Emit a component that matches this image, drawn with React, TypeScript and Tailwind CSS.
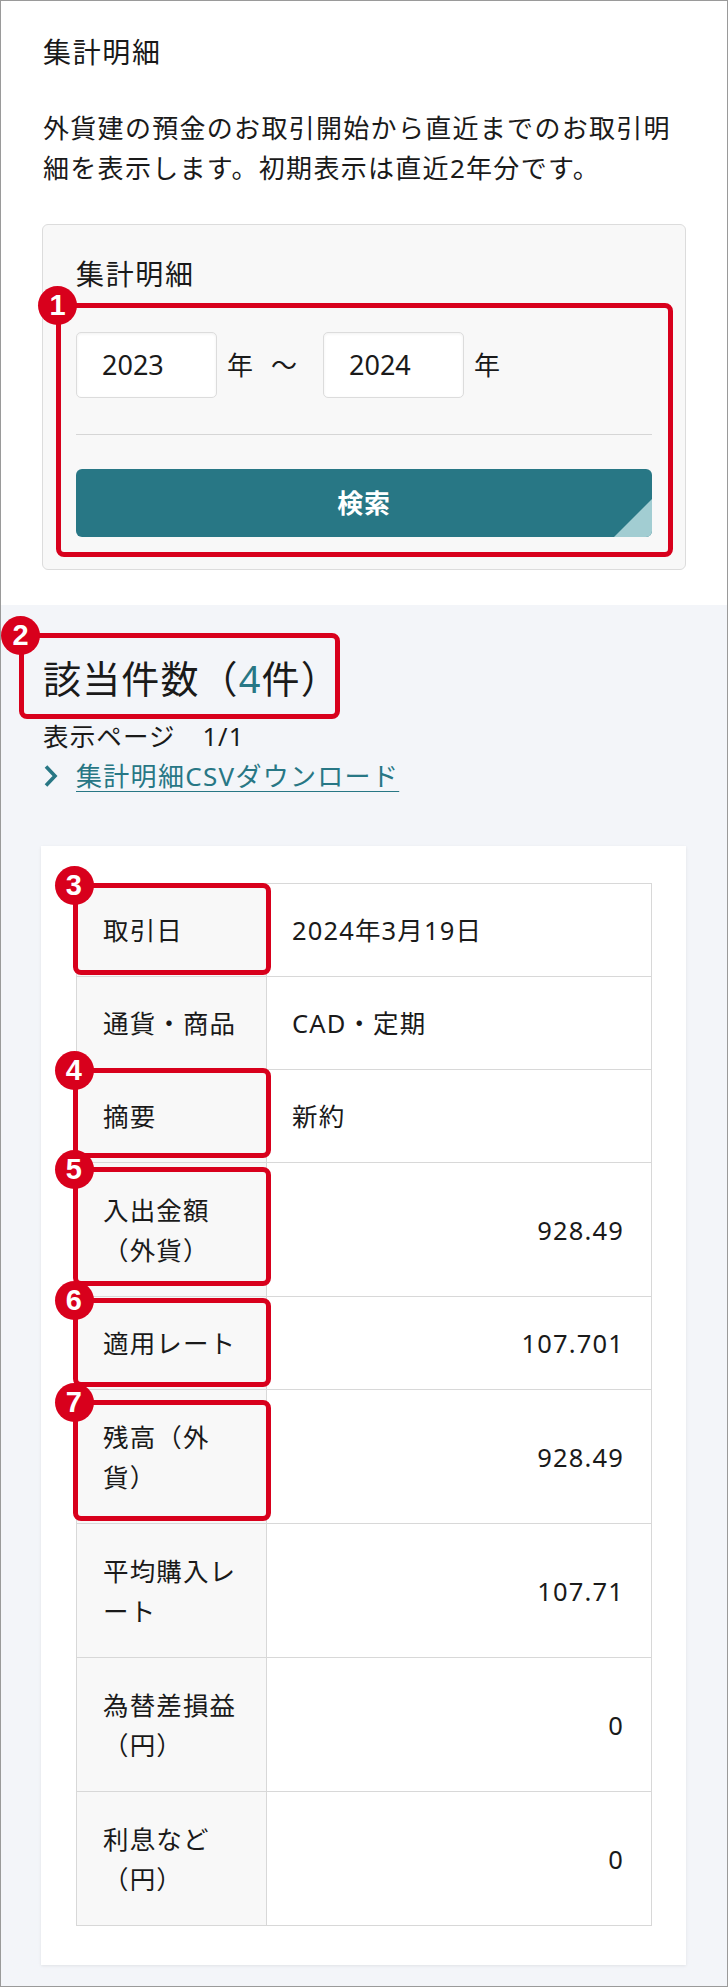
import React from "react";

function Mark({ n, box }: { n: number; box: string }) {
  return (
    <div className={`pointer-events-none absolute z-10 ${box}`}>
      <div className="absolute inset-0 rounded-[8px] border-[5px] border-[#d8001c]" />
      <div className="absolute -left-[18px] -top-[17px] flex h-[39px] w-[39px] items-center justify-center rounded-full bg-[#d8001c] font-['Liberation_Sans','Noto_Sans',sans-serif] text-[29px] font-bold leading-none text-white">
        {n}
      </div>
    </div>
  );
}

type Row = {
  label: string[];
  value: string;
  right?: boolean;
  mark?: { n: number; box: string };
};

const rows: Row[] = [
  { label: ["取引日"], value: "2024年3月19日", mark: { n: 3, box: "-left-[4px] w-[198px] -top-[1px] bottom-[1px]" } },
  { label: ["通貨・商品"], value: "CAD・定期" },
  { label: ["摘要"], value: "新約", mark: { n: 4, box: "-left-[4px] w-[198px] -top-[2px] bottom-[4px]" } },
  { label: ["入出金額", "（外貨）"], value: "928.49", right: true, mark: { n: 5, box: "-left-[4px] w-[198px] top-[4px] bottom-[10px]" } },
  { label: ["適用レート"], value: "107.701", right: true, mark: { n: 6, box: "-left-[4px] w-[198px] top-[1px] bottom-[2px]" } },
  { label: ["残高（外", "貨）"], value: "928.49", right: true, mark: { n: 7, box: "-left-[4px] w-[198px] top-[10px] bottom-[2px]" } },
  { label: ["平均購入レ", "ート"], value: "107.71", right: true },
  { label: ["為替差損益", "（円）"], value: "0", right: true },
  { label: ["利息など", "（円）"], value: "0", right: true },
];

export default function App() {
  return (
    <div className="h-[1987px] w-[728px] overflow-hidden border border-[#9a9a9a] bg-[#f3f5f9] font-['Noto_Sans','Noto_Sans_CJK_JP',sans-serif] text-[#1a1a1a]">
      {/* Top white section */}
      <section className="bg-white px-[42px] pb-[35px] pt-[31px]">
        <h1 className="text-[28px] font-normal leading-[40px] tracking-[0.06em]">集計明細</h1>
        <p className="mt-[36px] text-[26px] leading-[40px] tracking-[0.05em]">
          外貨建の預金のお取引開始から直近までのお取引明細を表示します。初期表示は直近2年分です。
        </p>

        <div className="relative -mx-[1px] mt-[36px] rounded-[6px] border border-[#dcdcdc] bg-[#f8f8f8] px-[33px] pb-[32px] pt-[29px]">
          <h2 className="text-[28px] font-normal leading-[40px] tracking-[0.06em]">集計明細</h2>
          <div className="mt-[38px] flex items-center text-[26px]">
            <div className="flex h-[66px] w-[141px] items-center rounded-[5px] border border-[#dcdcdc] bg-white pl-[25px] text-[27px] shadow-[inset_0_1px_3px_rgba(0,0,0,0.06)]">
              2023
            </div>
            <span className="ml-[10px]">年</span>
            <span className="ml-[18px]">～</span>
            <div className="ml-[26px] flex h-[66px] w-[141px] items-center rounded-[5px] border border-[#dcdcdc] bg-white pl-[25px] text-[27px] shadow-[inset_0_1px_3px_rgba(0,0,0,0.06)]">
              2024
            </div>
            <span className="ml-[10px]">年</span>
          </div>
          <div className="mt-[36px] h-px bg-[#d6d6d6]" />
          <button
            type="button"
            className="relative mt-[34px] flex h-[68px] w-full items-center justify-center overflow-hidden rounded-[6px] bg-[#287785] text-[26px] font-bold tracking-[0.03em] text-white"
          >
            検索
            <svg className="absolute bottom-0 right-0" width="38" height="38" viewBox="0 0 38 38">
              <polygon points="38,0 38,38 0,38" fill="#a2cdd2" />
            </svg>
          </button>
          <Mark n={1} box="left-[13px] right-[12px] top-[78px] bottom-[12px]" />
        </div>
      </section>

      {/* Results section */}
      <section className="relative px-[42px] pt-[48px]">
        <h2 className="text-[38px] font-normal leading-[50px] tracking-[0.03em]">
          該当件数（<span className="text-[#287785]">4</span>件）
        </h2>
        <p className="mt-[13px] text-[25.5px] leading-[40px] tracking-[0.045em]">表示ページ　1/1</p>
        <div className="flex items-center text-[26px] leading-[40px] tracking-[0.05em]">
          <svg width="15" height="24" viewBox="0 0 15 24" className="shrink-0">
            <polyline points="3,2.5 12,12 3,21.5" fill="none" stroke="#287785" strokeWidth="3.6" />
          </svg>
          <a href="#" className="ml-[18px] text-[#287785] underline decoration-1 underline-offset-[5px]">
            集計明細CSVダウンロード
          </a>
        </div>

        <div className="-ml-[2px] -mr-[1px] mt-[50px] bg-white pb-[39px] pl-[35px] pr-[34px] pt-[37px] shadow-[0_1px_3px_rgba(0,0,0,0.08)]">
          <div className="border-l border-r border-t border-[#d8d8d8] text-[25.5px] leading-[40px] tracking-[0.045em]">
            {rows.map((r, i) => (
              <div key={i} className="relative flex border-b border-[#d8d8d8]">
                <div
                  className={`w-[190px] shrink-0 whitespace-nowrap border-r border-[#d8d8d8] bg-[#f8f8f8] pl-[26px] ${
                    r.label.length > 1 ? "pb-[26px] pt-[27px]" : "py-[26px]"
                  }`}
                >
                  {r.label.map((l, j) => (
                    <div key={j}>{l}</div>
                  ))}
                </div>
                <div
                  className={`flex flex-1 items-center pl-[25px] pr-[27px] ${
                    r.right ? "justify-end" : "justify-start"
                  }`}
                >
                  {r.value}
                </div>
                {r.mark && <Mark n={r.mark.n} box={r.mark.box} />}
              </div>
            ))}
          </div>
        </div>
        <Mark n={2} box="left-[18px] top-[28px] w-[321px] h-[86px]" />
      </section>
    </div>
  );
}
